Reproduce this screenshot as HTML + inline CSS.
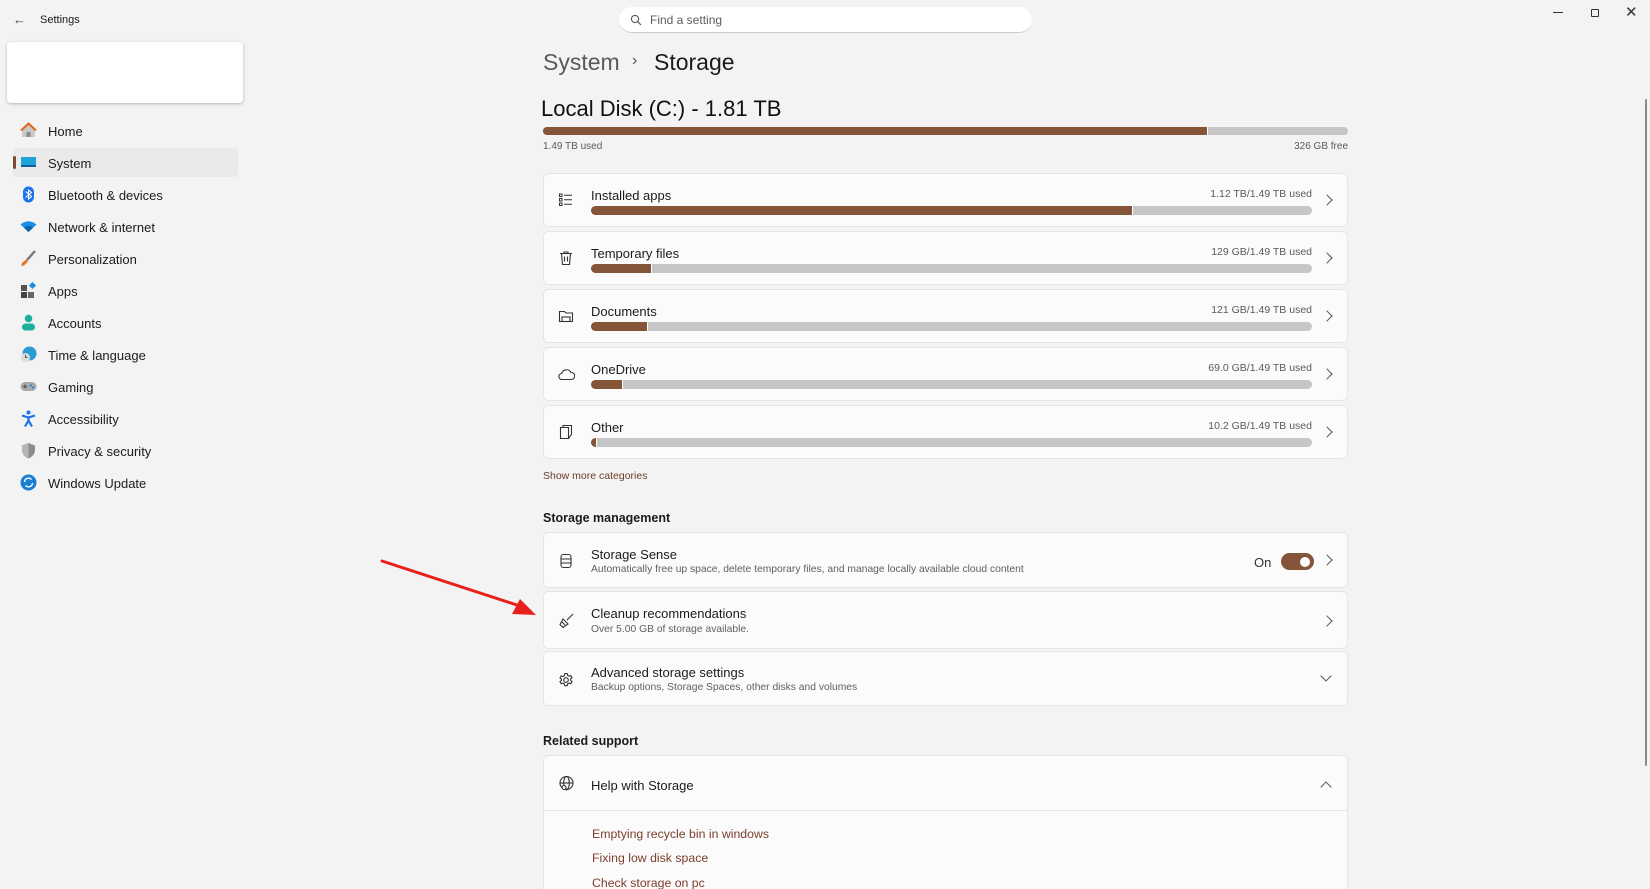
<!DOCTYPE html>
<html><head><meta charset="utf-8"><style>
*{margin:0;padding:0;box-sizing:border-box}
html,body{width:1650px;height:889px;overflow:hidden}
body{background:#f3f3f3;font-family:"Liberation Sans",sans-serif;color:#1b1b1b;position:relative}
.a{position:absolute}
.t{position:absolute;white-space:nowrap}
.nav{position:absolute;left:48px;font-size:13px;color:#1b1b1b}
.ic{position:absolute;left:20px;width:17px;height:17px}
.card{position:absolute;left:543px;width:805px;background:#fbfbfb;border:1px solid #e5e5e5;border-radius:5px}
.lbl{position:absolute;left:47px;font-size:13px;color:#1b1b1b}
.rt{position:absolute;right:35px;font-size:10.5px;color:#5a5a5a}
.bar{position:absolute;left:47px;width:721px;height:9px;background:#c6c6c6;border-radius:5px;overflow:hidden}
.bar i{display:block;height:100%;background:#85553a;border-right:1px solid #fff}
.chev{position:absolute;right:16px;width:8px;height:8px;border-right:1.3px solid #555;border-top:1.3px solid #555;transform:rotate(45deg)}
.sub{position:absolute;left:47px;font-size:10.3px;color:#5f5f5f}
.cicon{position:absolute;left:14px}
.link{position:absolute;left:48px;font-size:12.3px;color:#7a3e2c}
</style></head><body>
<div class="t" style="left:13px;top:12px;font-size:13px;color:#444">&#8592;</div>
<div class="t" style="left:40px;top:14px;font-size:11px;color:#1b1b1b">Settings</div>
<div class="a" style="left:619px;top:7px;width:413px;height:26px;background:#fff;border-radius:13px;border-bottom:1px solid #ccc"></div>
<svg class="a" style="left:630px;top:14px" width="12" height="12" viewBox="0 0 12 12"><circle cx="5" cy="5" r="3.6" fill="none" stroke="#555" stroke-width="1.1"/><path d="M7.6 7.6L11 11" stroke="#555" stroke-width="1.2"/></svg>
<div class="t" style="left:650px;top:13px;font-size:12px;color:#5c5c5c">Find a setting</div>
<div class="a" style="left:1553px;top:12px;width:10px;height:1px;background:#333"></div>
<div class="a" style="left:1591px;top:9px;width:8px;height:8px;border:1px solid #333;border-radius:1px"></div>
<div class="t" style="left:1625px;top:3px;font-size:15px;color:#333">&#x2715;</div>
<div class="a" style="left:1645px;top:99px;width:2px;height:667px;background:#8a8a8a;border-radius:1px"></div>

<div class="a" style="left:7px;top:42px;width:236px;height:61px;background:#fff;border-radius:4px;box-shadow:0 1px 3px rgba(0,0,0,.25)"></div>
<div class="a" style="left:13px;top:148px;width:225px;height:29px;background:#eaeaea;border-radius:4px"></div>
<div class="a" style="left:13px;top:156px;width:3px;height:13px;background:#7a4a34;border-radius:2px"></div>
<svg class="ic" style="top:122px" viewBox="0 0 17 17"><path d="M2 8L8.5 2 15 8V15H2Z" fill="#c9c9c9"/><path d="M1 8.5L8.5 1.5 16 8.5" fill="none" stroke="#e0651f" stroke-width="2"/><rect x="6.5" y="10" width="4" height="5" fill="#8a8a8a"/></svg>
<div class="nav" style="top:124px">Home</div>
<svg class="ic" style="top:154px" viewBox="0 0 17 17"><rect x="1" y="3" width="15" height="10" fill="#1fa3d9"/><rect x="1" y="11" width="15" height="2" fill="#0e5f9c"/></svg>
<div class="nav" style="top:156px">System</div>
<svg class="ic" style="top:186px" viewBox="0 0 17 17"><rect x="3" y="0.5" width="11" height="16" rx="5.5" fill="#1a73e8"/><path d="M5.5 5.5l6 5-3 2.5v-9l3 2.5-6 5" fill="none" stroke="#fff" stroke-width="1.1"/></svg>
<div class="nav" style="top:188px">Bluetooth &amp; devices</div>
<svg class="ic" style="top:218px" viewBox="0 0 17 17"><path d="M0.5 6.5Q8.5 0 16.5 6.5L8.5 14Z" fill="#1a8ee0"/><path d="M4 9.8Q8.5 6 13 9.8L8.5 14Z" fill="#0d5fa8"/></svg>
<div class="nav" style="top:220px">Network &amp; internet</div>
<svg class="ic" style="top:250px" viewBox="0 0 17 17"><path d="M15 1L7 10" stroke="#777" stroke-width="2.4"/><path d="M6 9.5l2 2-4 4-3 0.5 1-3z" fill="#e8761f"/></svg>
<div class="nav" style="top:252px">Personalization</div>
<svg class="ic" style="top:282px" viewBox="0 0 17 17"><rect x="1" y="3" width="6" height="6" fill="#555"/><rect x="1" y="10" width="6" height="6" fill="#444"/><rect x="8" y="10" width="6" height="6" fill="#666"/><rect x="10" y="1" width="5" height="5" fill="#1a8ee0" transform="rotate(45 12.5 3.5)"/></svg>
<div class="nav" style="top:284px">Apps</div>
<svg class="ic" style="top:314px" viewBox="0 0 17 17"><circle cx="8.5" cy="4.5" r="3.8" fill="#1cae9e"/><rect x="2" y="9.5" width="13" height="7" rx="3.5" fill="#1cae9e"/></svg>
<div class="nav" style="top:316px">Accounts</div>
<svg class="ic" style="top:346px" viewBox="0 0 17 17"><circle cx="9.5" cy="7.5" r="7" fill="#2b9bd6"/><circle cx="5.5" cy="11.5" r="4.5" fill="#dcdcdc"/><path d="M5.5 9v2.5h2" stroke="#555" fill="none"/></svg>
<div class="nav" style="top:348px">Time &amp; language</div>
<svg class="ic" style="top:378px" viewBox="0 0 17 17"><rect x="0.5" y="4" width="16" height="9" rx="4.5" fill="#a9a9a9"/><path d="M3 8.5h4M5 6.5v4" stroke="#555" stroke-width="1.2"/><circle cx="11" cy="7.5" r="1" fill="#1a73e8"/><circle cx="13" cy="9.5" r="1" fill="#1a73e8"/></svg>
<div class="nav" style="top:380px">Gaming</div>
<svg class="ic" style="top:410px" viewBox="0 0 17 17"><circle cx="8.5" cy="2.5" r="2" fill="#1a73e8"/><path d="M2 5.5l6.5 2 6.5-2M8.5 7.5v3M8.5 10.5l-3.5 6M8.5 10.5l3.5 6" stroke="#1a73e8" stroke-width="2.2" fill="none"/></svg>
<div class="nav" style="top:412px">Accessibility</div>
<svg class="ic" style="top:442px" viewBox="0 0 17 17"><path d="M8.5 1L15 3.5V8c0 4-3 7-6.5 8.5C5 15 2 12 2 8V3.5Z" fill="#8c8c8c"/><path d="M8.5 1V16.5C5 15 2 12 2 8V3.5Z" fill="#b5b5b5"/></svg>
<div class="nav" style="top:444px">Privacy &amp; security</div>
<svg class="ic" style="top:474px" viewBox="0 0 17 17"><circle cx="8.5" cy="8.5" r="8" fill="#1a7fd4"/><path d="M4.5 8a4 4 0 0 1 7-2.5M12.5 9a4 4 0 0 1-7 2.5" stroke="#fff" stroke-width="1.4" fill="none"/></svg>
<div class="nav" style="top:476px">Windows Update</div>

<div class="t" style="left:543px;top:49px;font-size:23px;color:#5a5a5a">System</div>
<div class="t" style="left:632px;top:52px;font-size:16px;color:#555">&#8250;</div>
<div class="t" style="left:654px;top:49px;font-size:23px;color:#1b1b1b">Storage</div>
<div class="t" style="left:541px;top:96px;font-size:22px;color:#111">Local Disk (C:) - 1.81 TB</div>
<div class="a" style="left:543px;top:127px;width:805px;height:8px;background:#c6c6c6;border-radius:4px;overflow:hidden"><div style="width:665px;height:100%;background:#85553a;border-right:1px solid #fff"></div></div>
<div class="t" style="left:543px;top:141px;font-size:10px;color:#5a5a5a">1.49 TB used</div>
<div class="t" style="right:302px;top:141px;font-size:10px;color:#5a5a5a">326 GB free</div>

<div class="card" style="top:173px;height:54px">
 <svg class="cicon" style="top:18px" width="16" height="16" viewBox="0 0 16 16" fill="none" stroke="#333" stroke-width="1"><rect x="1.5" y="2" width="2.5" height="2.5"/><rect x="1.5" y="6.5" width="2.5" height="2.5"/><rect x="1.5" y="11" width="2.5" height="2.5"/><path d="M6 3.3h8M6 7.8h8M6 12.3h8"/></svg>
 <div class="lbl" style="top:14px">Installed apps</div><div class="rt" style="top:14px">1.12 TB/1.49 TB used</div>
 <div class="bar" style="top:32px"><i style="width:75.2%"></i></div><div class="chev" style="top:22px"></div></div>
<div class="card" style="top:231px;height:54px">
 <svg class="cicon" style="top:18px" width="16" height="16" viewBox="0 0 16 16" fill="none" stroke="#333" stroke-width="1.1"><path d="M2 3.5h12M6 3.5V2h4v1.5M3.5 3.5l1 11h7l1-11M6.5 6.5v5M9.5 6.5v5"/></svg>
 <div class="lbl" style="top:14px">Temporary files</div><div class="rt" style="top:14px">129 GB/1.49 TB used</div>
 <div class="bar" style="top:32px"><i style="width:8.5%"></i></div><div class="chev" style="top:22px"></div></div>
<div class="card" style="top:289px;height:54px">
 <svg class="cicon" style="top:18px" width="16" height="16" viewBox="0 0 16 16" fill="none" stroke="#333" stroke-width="1.1"><path d="M1.5 3.5h5l1.5 1.5h6.5v8.5h-13z"/><rect x="4" y="9" width="8" height="4.5"/></svg>
 <div class="lbl" style="top:14px">Documents</div><div class="rt" style="top:14px">121 GB/1.49 TB used</div>
 <div class="bar" style="top:32px"><i style="width:7.9%"></i></div><div class="chev" style="top:22px"></div></div>
<div class="card" style="top:347px;height:54px">
 <svg class="cicon" style="top:19px" width="17" height="14" viewBox="0 0 17 14" fill="none" stroke="#333" stroke-width="1.1"><path d="M4 12.5a3 3 0 0 1-.3-6A5 5 0 0 1 13 5.5a3.5 3.5 0 0 1 .5 7z"/></svg>
 <div class="lbl" style="top:14px">OneDrive</div><div class="rt" style="top:14px">69.0 GB/1.49 TB used</div>
 <div class="bar" style="top:32px"><i style="width:4.4%"></i></div><div class="chev" style="top:22px"></div></div>
<div class="card" style="top:405px;height:54px">
 <svg class="cicon" style="top:18px" width="16" height="16" viewBox="0 0 16 16" fill="none" stroke="#333" stroke-width="1.1"><path d="M2.5 3.5h8v11h-8zM5 3.5V1.5h8.5v9l-3 4"/></svg>
 <div class="lbl" style="top:14px">Other</div><div class="rt" style="top:14px">10.2 GB/1.49 TB used</div>
 <div class="bar" style="top:32px"><i style="width:0.8%"></i></div><div class="chev" style="top:22px"></div></div>
<div class="t" style="left:543px;top:470px;font-size:10.5px;color:#6e3e2c">Show more categories</div>

<div class="t" style="left:543px;top:511px;font-size:12.5px;font-weight:bold;color:#1b1b1b">Storage management</div>
<div class="card" style="top:532px;height:56px">
 <svg class="cicon" style="top:20px" width="16" height="16" viewBox="0 0 16 16" fill="none" stroke="#333" stroke-width="1.1"><rect x="3" y="1.5" width="10" height="13" rx="2.5"/><path d="M3 6h10M3 10h10"/></svg>
 <div class="lbl" style="top:14px">Storage Sense</div>
 <div class="sub" style="top:31px">Automatically free up space, delete temporary files, and manage locally available cloud content</div>
 <div class="t" style="left:710px;top:22px;font-size:13px;color:#333">On</div>
 <div class="a" style="left:737px;top:20px;width:33px;height:17px;border-radius:9px;background:#85553a"><div class="a" style="left:19px;top:3.5px;width:10px;height:10px;border-radius:50%;background:#fff"></div></div>
 <div class="chev" style="top:23px"></div></div>
<div class="card" style="top:591px;height:58px">
 <svg class="cicon" style="top:21px" width="16" height="16" viewBox="0 0 16 16" fill="none" stroke="#333" stroke-width="1.1"><path d="M15 1L9 7M5 6l5 5-5 3.5-3-3z M4 9l3 3"/></svg>
 <div class="lbl" style="top:14px">Cleanup recommendations</div>
 <div class="sub" style="top:32px">Over 5.00 GB of storage available.</div>
 <div class="chev" style="top:25px"></div></div>
<div class="card" style="top:651px;height:55px">
 <svg class="cicon" style="top:20px" width="16" height="16" viewBox="0 0 16 16" fill="none" stroke="#333" stroke-width="1.1"><circle cx="8" cy="8" r="2.3"/><path d="M6.8 1.5h2.4l.4 1.8 1.4.8 1.8-.6 1.2 2.1-1.4 1.2v1.6l1.4 1.2-1.2 2.1-1.8-.6-1.4.8-.4 1.8H6.8l-.4-1.8-1.4-.8-1.8.6-1.2-2.1 1.4-1.2V7.2L2 6l1.2-2.1 1.8.6 1.4-.8z"/></svg>
 <div class="lbl" style="top:13px">Advanced storage settings</div>
 <div class="sub" style="top:30px">Backup options, Storage Spaces, other disks and volumes</div>
 <div class="a" style="right:17px;top:20px;width:8px;height:8px;border-right:1.3px solid #555;border-bottom:1.3px solid #555;transform:rotate(45deg)"></div></div>

<div class="t" style="left:543px;top:734px;font-size:12.5px;font-weight:bold;color:#1b1b1b">Related support</div>
<div class="card" style="top:755px;height:136px;border-radius:5px 5px 0 0">
 <svg class="cicon" style="top:19px" width="17" height="17" viewBox="0 0 17 17" fill="none" stroke="#333" stroke-width="1.1"><circle cx="8.5" cy="8" r="6.5"/><ellipse cx="8.5" cy="8" rx="2.8" ry="6.5"/><path d="M2 8h13"/><circle cx="6" cy="12.5" r="2" fill="#fbfbfb"/><path d="M7.4 14l1.5 1.5"/></svg>
 <div class="lbl" style="top:22px">Help with Storage</div>
 <div class="a" style="right:17px;top:27px;width:8px;height:8px;border-left:1.3px solid #555;border-top:1.3px solid #555;transform:rotate(45deg)"></div>
 <div class="a" style="left:0;top:54px;width:803px;height:1px;background:#e5e5e5"></div>
 <div class="link" style="top:71px">Emptying recycle bin in windows</div>
 <div class="link" style="top:95px">Fixing low disk space</div>
 <div class="link" style="top:120px">Check storage on pc</div>
</div>

<svg class="a" style="left:370px;top:550px" width="180" height="80" viewBox="0 0 180 80"><path d="M12 11L150 56" stroke="#e8201c" stroke-width="3" stroke-linecap="round"/><path d="M166 65L142 64 150 49Z" fill="#e8201c"/></svg>
</body></html>
